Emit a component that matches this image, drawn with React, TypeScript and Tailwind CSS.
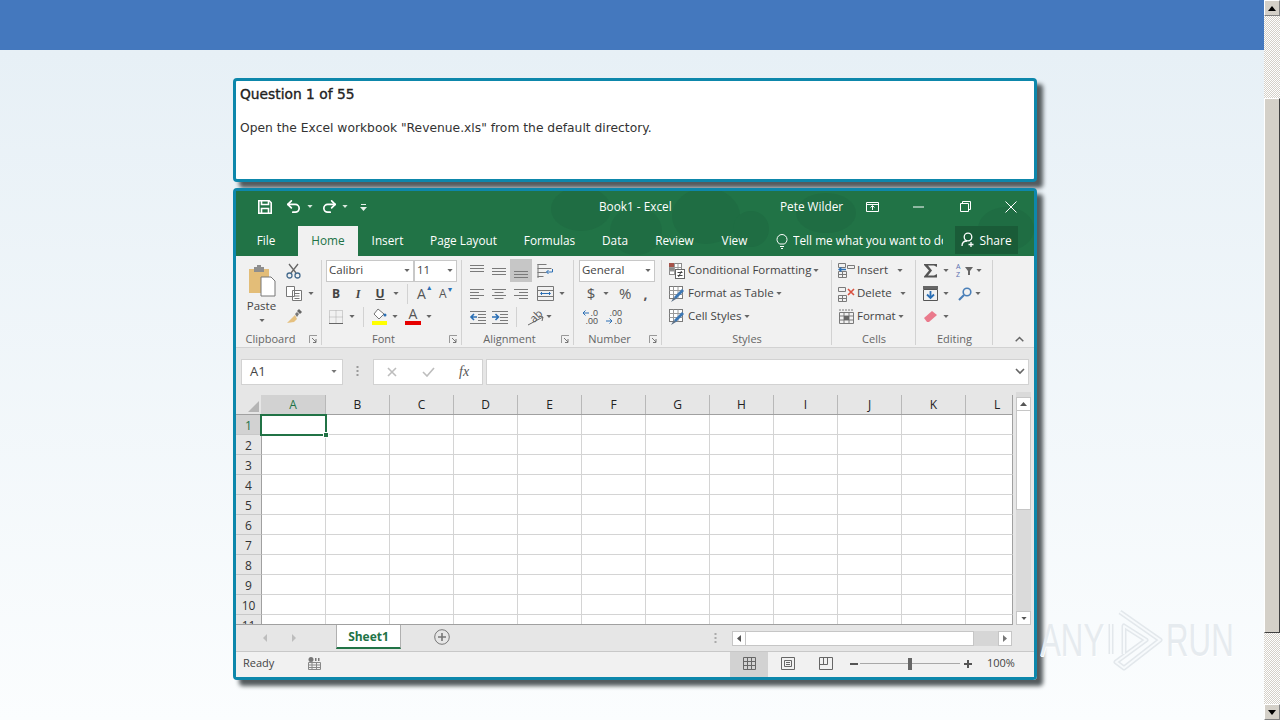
import React from "react";
import { Undo2, Redo2 } from "lucide-react";

const Caret = ({ c = "#666", className = "" }: { c?: string; className?: string }) => (
  <svg width="6" height="3" viewBox="0 0 7 4" className={className}><path d="M0 0h7L3.500 4z" fill={c} /></svg>
);

const Launcher = () => (
  <svg width="9" height="9" viewBox="0 0 9 9"><path d="M.5 8V.5H8" fill="none" stroke="#999" /><path d="M3 3l4 4M7 4v3.500H4" fill="none" stroke="#777" /></svg>
);

const AlignV = ({ top }: { top: number }) => (
  <svg width="16" height="14" viewBox="0 0 16 14">
    {[0, 3, 6].map((d) => (
      <path key={d} d={`M1 ${top + d + 0.5}h14`} stroke="#7a7a7a" />
    ))}
  </svg>
);

const AlignH = ({ kind }: { kind: "l" | "c" | "r" }) => {
  const w = [14, 9, 14, 9];
  return (
    <svg width="16" height="14" viewBox="0 0 16 14">
      {w.map((l, i) => {
        const x = kind === "l" ? 1 : kind === "r" ? 15 - l : 8 - l / 2;
        return <path key={i} d={`M${x} ${2.5 + i * 3}h${l}`} stroke="#7a7a7a" />;
      })}
    </svg>
  );
};

const Indent = ({ flip }: { flip?: boolean }) => (
  <svg width="18" height="14" viewBox="0 0 18 14">
    {[1, 4, 7, 10, 13].map((y) => (
      <path key={y} d={`M${y === 1 || y === 13 ? 1 : 9} ${y + 0.5}H17`} stroke="#7a7a7a" />
    ))}
    <path d={flip ? "M1 7h6M4.500 4L7.500 7l-3 3" : "M2 7h6M5 4L2 7l3 3"} fill="none" stroke="#2b6fb5" strokeWidth="1.600" />
  </svg>
);

const CondIcon = () => (
  <svg width="17" height="17" viewBox="0 0 17 17">
    <rect x="1.500" y="1.500" width="12" height="11" fill="#fff" stroke="#8a8a8a" />
    <path d="M1 1h5v4H1z" fill="#a5534a" />
    <path d="M1 5h5v4H1z" fill="#8a8a8a" />
    <path d="M6.500 1.500v11M1.500 5.500h12M1.500 9h12M10 1.500v11" stroke="#9a9a9a" />
    <rect x="7.500" y="7.500" width="9" height="9" fill="#fff" stroke="#666" />
    <path d="M9.500 10.500h5M9.500 13.500h5M13.500 9l-3 6" stroke="#444" fill="none" />
  </svg>
);

const TableIcon = () => (
  <svg width="17" height="17" viewBox="0 0 17 17">
    <rect x="1.500" y="1.500" width="13" height="12" fill="#fff" stroke="#7a7a7a" />
    <path d="M1.500 5.500h13M1.500 9.500h13M5.500 1.500v12M10 1.500v12" stroke="#9a9a9a" />
    <path d="M16 6l-6 6-2 2-2-2 2-2 6-6z" fill="#3d78b5" />
    <path d="M3 17l3-5 2 2z" fill="#5a6f86" />
  </svg>
);

const InsertIcon = () => (
  <svg width="17" height="17" viewBox="0 0 17 17" fill="none">
    <path d="M.5 1.500h7v4h-7zM.5 9.500h8v6h-8zM4.500 9.500v6M.5 12.500h8" stroke="#7a7a7a" />
    <path d="M9.500 3.500h7v3h-7z" stroke="#7a7a7a" />
    <path d="M1 7.500h7M3.500 5.500L1 7.500l2.500 2" stroke="#2b6fb5" strokeWidth="1.300" />
  </svg>
);

const RibbonRow = ({ children, className = "" }: { children?: React.ReactNode; className?: string }) => (
  <div className={`flex h-[23px] items-center ${className}`}>{children}</div>
);

const Group = ({ label, launcher, widthClass, children }: { label: string; launcher?: boolean; widthClass: string; children: React.ReactNode }) => (
  <div className={`relative flex h-full flex-col pt-[3px] ${widthClass}`}>
    <div className="h-[73px]">{children}</div>
    <div className={`flex h-[16px] items-center justify-center text-[11px] text-[#666] ${launcher ? "pr-[17px]" : ""}`}>{label}</div>
    <div className="absolute right-0 top-[4px] h-[85px] w-px bg-[#d2d2d2]" />
    {launcher && (
      <div className="absolute right-[4px] bottom-[3px]">
        <Launcher />
      </div>
    )}
  </div>
);

const Sep = ({ className = "" }: { className?: string }) => <div className={`h-[20px] w-px bg-[#d2d2d2] ${className}`} />;

const Combo = ({ text, w }: { text: string; w: string }) => (
  <div className={`mt-[1px] flex h-[22px] items-center justify-between border border-[#c8c8c8] bg-white pb-[2px] pl-[2px] pr-[3px] text-[11.5px] text-[#444] ${w}`}>
    <span>{text}</span>
    <Caret />
  </div>
);

const COLS = ["A", "B", "C", "D", "E", "F", "G", "H", "I", "J", "K", "L"];
const ROWS = [1, 2, 3, 4, 5, 6, 7, 8, 9, 10, 11];

const SmallBtn = ({ children, className = "" }: { children?: React.ReactNode; className?: string }) => (
  <div className={`flex items-center justify-center border border-[#c6c6c6] bg-white ${className}`}>{children}</div>
);

export default function App() {
  return (
    <div className="relative flex h-[720px] w-[1280px] overflow-hidden font-['Open_Sans',sans-serif]">
      <main className="flex h-full w-[1264px] flex-col">
        <header className="h-[50px] shrink-0 bg-[#4478be]" />
        <div className="flex-1 bg-gradient-to-b from-[#e7f0f6] to-[#fbfdfe] pl-[233px] pt-[28px]">
          {/* Question */}
          <section className="h-[104px] w-[804px] rounded-[4px] border-[3px] border-[#0d87ab] bg-white pl-[4px] shadow-[6px_6px_4px_#545b5e] font-['DejaVu_Sans',sans-serif] text-[#222]">
            <h1 className="mt-[2px] text-[13.8px] leading-[22px] font-normal [-webkit-text-stroke:0.35px_#222]">Question 1 of 55</h1>
            <p className="mt-[12px] text-[12.3px] leading-[22px] text-[#333]">Open the Excel workbook "Revenue.xls" from the default directory.</p>
          </section>

          {/* Excel */}
          <section className="mt-[6px] flex h-[492px] w-[804px] flex-col rounded-[4px] border-[3px] border-[#0d87ab] shadow-[6px_6px_4px_#545b5e]">
            <div className="relative h-[65px] shrink-0 bg-[#217346] text-[11.8px] text-white">
              <svg className="absolute inset-0" width="798" height="65" viewBox="0 0 798 65">
                <g fill="#1f6d43">
                  <ellipse cx="345" cy="18" rx="30" ry="22" />
                  <ellipse cx="400" cy="40" rx="26" ry="24" />
                  <ellipse cx="470" cy="25" rx="34" ry="28" />
                  <ellipse cx="515" cy="38" rx="18" ry="18" />
                  <ellipse cx="590" cy="22" rx="30" ry="20" />
                  <ellipse cx="770" cy="38" rx="28" ry="22" />
                </g>
              </svg>

              {/* Title */}
              <div className="relative flex h-[35px] items-center pb-[4px]">
                <svg className="ml-[22px]" width="14" height="14" viewBox="0 0 14 14" fill="none" stroke="#fff" strokeWidth="1.600">
                  <path d="M.8.8h10.400l2 2v10.400H.8z" />
                  <path d="M3.500 1v3.500h7V1M3.500 13V8.500h7V13" />
                </svg>
                <Undo2 className="ml-[13px]" size={17} strokeWidth={2.4} color="#fff" />
                <Caret c="#d8e8de" className="ml-[5px]" />
                <Redo2 className="ml-[8px]" size={17} strokeWidth={2.4} color="#fff" />
                <Caret c="#d8e8de" className="ml-[4px]" />
                <svg className="ml-[12px]" width="7" height="8" viewBox="0 0 7 8"><path d="M1 1.500h5" stroke="#e8f2ec" /><path d="M0 4h7L3.500 8z" fill="#e8f2ec" /></svg>
                <span className="ml-[232px] w-[181px]">Book1 - Excel</span>
                <span>Pete Wilder</span>
                <svg className="ml-[23px]" width="13" height="10" viewBox="0 0 13 10" fill="none" stroke="#fff"><path d="M.5.500h12v9H.5zM.5 2.500h12M6.500 8V4M4.500 5.500l2-2 2 2" /></svg>
                <svg className="ml-[34px]" width="11" height="2" viewBox="0 0 11 2"><path d="M0 1h11" stroke="#fff" /></svg>
                <svg className="ml-[36px]" width="11" height="11" viewBox="0 0 11 11" fill="none" stroke="#fff"><path d="M.5 2.500h8v8h-8zM2.500 2.500v-2h8v8h-2" /></svg>
                <svg className="ml-[34px]" width="12" height="12" viewBox="0 0 12 12" fill="none" stroke="#fff"><path d="M.5.500l11 11M11.500.5l-11 11" /></svg>
              </div>

              {/* Tabs */}
              <div className="relative flex h-[30px] items-center">
                <div className="flex h-full w-[60px] items-center justify-center">File</div>
                <div className="ml-[2px] flex h-full w-[60px] items-center justify-center bg-[#f1f1f1] text-[#217346]">Home</div>
                <div className="flex h-full w-[59px] items-center justify-center">Insert</div>
                <div className="flex h-full w-[93px] items-center justify-center">Page Layout</div>
                <div className="flex h-full w-[79px] items-center justify-center">Formulas</div>
                <div className="flex h-full w-[52px] items-center justify-center">Data</div>
                <div className="flex h-full w-[67px] items-center justify-center">Review</div>
                <div className="flex h-full w-[53px] items-center justify-center">View</div>
                <svg className="ml-[15px]" width="12" height="15" viewBox="0 0 12 15" fill="none" stroke="#fff"><path d="M3.500 10C2 8.500 1 7.500 1 5.500a5 5 0 0 1 10 0c0 2-1 3-2.500 4.500zM4 12.500h4M5 14.500h2" /></svg>
                <div className="ml-[5px] w-[150px] overflow-hidden whitespace-nowrap">Tell me what you want to do</div>
                <div className="ml-[12px] flex h-[28px] w-[63px] items-center justify-center gap-[3px] self-start bg-[#1a5c38]">
                  <svg width="15" height="16" viewBox="0 0 15 16" fill="none" stroke="#fff" strokeWidth="1.300"><circle cx="7" cy="5" r="3.800" /><path d="M1 14c0-3 2-5 5-5M10 10v5M7.500 12.500h5" /></svg>
                  <span className="pt-[1px] text-[12px]">Share</span>
                </div>
              </div>
            </div>

            {/* Ribbon */}
            <div className="flex h-[92px] shrink-0 border-b border-[#d2d2d2] bg-[#f1f1f1] text-[#444]">
              <Group label="Clipboard" launcher widthClass="w-[86px]">
                <div className="flex h-full">
                  <div className="flex w-[48px] flex-col items-center pl-[3px]">
                    <svg className="mt-[5px]" width="28" height="33" viewBox="0 0 28 33">
                      <path d="M1 5h20v24H1z" fill="#e3bd78" />
                      <path d="M6 3h10v5H6z" fill="#8e8e8e" />
                      <path d="M9 1h4v3H9z" fill="#8e8e8e" />
                      <path d="M13 13h10l4 4v15H13z" fill="#fff" stroke="#777" />
                    </svg>
                    <span className="mt-[1px] text-[11.5px] leading-[15px]">Paste</span>
                    <Caret className="mt-[6px]" />
                  </div>
                  <div className="flex flex-col">
                    <RibbonRow className="pl-[2px]">
                      <svg width="15" height="16" viewBox="0 0 15 16" fill="none" stroke="#456b8e" strokeWidth="1.300"><path d="M3 1l7 9M12 1L5 10" stroke="#666" /><circle cx="3.500" cy="12.500" r="2.500" /><circle cx="11.500" cy="12.500" r="2.500" /></svg>
                    </RibbonRow>
                    <RibbonRow className="gap-[6px] pl-[2px]">
                      <svg width="16" height="15" viewBox="0 0 16 15" fill="#fff" stroke="#777"><path d="M.5.500h8v10h-8zM6.500 4.500h9v10h-9z" /><path d="M8.500 7.500h5M8.500 10h5M8.500 12.500h5" /></svg>
                      <Caret />
                    </RibbonRow>
                    <RibbonRow className="pl-[2px]">
                      <svg width="16" height="15" viewBox="0 0 16 15"><path d="M9 6l-3 3-5 5 7-1 3-3z" fill="#e5c07f" /><path d="M9 5l2-2 2 2-2 3z" fill="#777" /><path d="M11 2l2-2 3 3-2 2z" fill="#666" /></svg>
                    </RibbonRow>
                  </div>
                </div>
              </Group>

              <Group label="Font" launcher widthClass="w-[140px]">
                <div className="flex flex-col pl-[4px]">
                  <div className="flex h-[23px] items-start">
                    <Combo text="Calibri" w="w-[88px]" />
                    <Combo text="11" w="w-[43px]" />
                  </div>
                  <RibbonRow>
                    <span className="w-[20px] text-center text-[12px] font-bold">B</span>
                    <span className="ml-[2px] w-[20px] text-center font-['Liberation_Serif',serif] text-[12px] font-bold italic">I</span>
                    <span className="ml-[2px] w-[20px] text-center text-[12px] font-bold underline">U</span>
                    <Caret className="ml-[3px]" />
                    <Sep className="ml-[8px]" />
                    <span className="ml-[9px] flex w-[16px] items-start text-[14px] text-[#555]">A<span className="text-[7px] text-[#2b6fb5]">▲</span></span>
                    <span className="ml-[6px] flex w-[16px] items-start text-[12px] text-[#555]">A<span className="text-[7px] text-[#2b6fb5]">▼</span></span>
                  </RibbonRow>
                  <RibbonRow>
                    <svg className="ml-[3px]" width="14" height="14" viewBox="0 0 14 14" fill="none"><path d="M.5.500h13v13H.5zM7 .500v13M.5 7h13" stroke="#aaa" strokeDasharray="1 1" /><path d="M0 13.500h14" stroke="#666" /></svg>
                    <Caret className="ml-[6px]" />
                    <Sep className="ml-[8px]" />
                    <div className="ml-[8px] flex w-[15px] flex-col items-center">
                      <svg width="15" height="12" viewBox="0 0 15 12"><path d="M6 1l6 5-5 5-5-5z" fill="#fff" stroke="#777" /><circle cx="13" cy="7" r="1.500" fill="#2b6fb5" /></svg>
                      <div className="mt-[1px] h-[4px] w-[15px] bg-[#ffff00]" />
                    </div>
                    <Caret className="ml-[5px]" />
                    <div className="ml-[7px] flex w-[16px] flex-col items-center leading-none">
                      <span className="h-[12px] text-[14px] leading-[12px] text-[#555]">A</span>
                      <div className="mt-[1px] h-[4px] w-[16px] bg-[#e60000]" />
                    </div>
                    <Caret className="ml-[5px]" />
                  </RibbonRow>
                </div>
              </Group>

              <Group label="Alignment" launcher widthClass="w-[112px]">
                <div className="flex flex-col pl-[7px]">
                  <RibbonRow className="gap-[6px]">
                    <AlignV top={1} />
                    <AlignV top={4} />
                    <div className="mx-[-3px] flex h-[23px] w-[22px] items-center justify-center bg-[#c6c6c6]"><AlignV top={7} /></div>
                    <svg className="ml-[2px]" width="17" height="16" viewBox="0 0 17 16" fill="none"><path d="M.5 1.500h9M.5 5.500h14M.5 9.500h9M.5 13.500h6M1 1v14" stroke="#7a7a7a" /><path d="M15.500 6v3h-6M11.500 7l-2 2 2 2" stroke="#2b6fb5" /></svg>
                  </RibbonRow>
                  <RibbonRow className="gap-[6px]">
                    <AlignH kind="l" />
                    <AlignH kind="c" />
                    <AlignH kind="r" />
                    <svg className="ml-[2px]" width="17" height="15" viewBox="0 0 17 15" fill="none"><path d="M.5.500h16v14H.5zM.5 4.500h16M.5 10.500h16" stroke="#777" /><path d="M4 7.500h9M5 6L3.500 7.500 5 9M12 6l1.500 1.500L12 9" stroke="#2b6fb5" /></svg>
                    <Caret className="ml-[-1px]" />
                  </RibbonRow>
                  <RibbonRow className="gap-[4px]">
                    <Indent />
                    <Indent flip />
                    <Sep className="ml-[3px]" />
                    <div className="relative ml-[4px] flex h-[18px] w-[20px] items-center justify-center">
                      <span className="mb-[3px] -rotate-45 text-[11px] leading-none text-[#555]">ab</span>
                      <svg className="absolute bottom-0 left-[2px]" width="18" height="11" viewBox="0 0 18 11" fill="none"><path d="M1 10L16 2M12 1l4 1-1 4" stroke="#666" /></svg>
                    </div>
                    <Caret className="ml-[-3px]" />
                  </RibbonRow>
                </div>
              </Group>

              <Group label="Number" launcher widthClass="w-[88px]">
                <div className="flex flex-col pl-[5px]">
                  <div className="flex h-[23px] items-start"><Combo text="General" w="w-[76px]" /></div>
                  <RibbonRow>
                    <span className="ml-[7px] w-[10px] text-center text-[15px] text-[#555]">$</span>
                    <Caret className="ml-[7px]" />
                    <span className="ml-[10px] text-[15px] text-[#555]">%</span>
                    <span className="ml-[12px] text-[14px] font-bold leading-[14px] text-[#555]">,</span>
                  </RibbonRow>
                  <RibbonRow className="gap-[7px] pl-[2px] font-['Liberation_Sans',sans-serif] text-[9px] leading-[8px] text-[#555]">
                    <div className="flex w-[17px] flex-col items-end">
                      <span className="flex items-center gap-[1px]"><svg width="7" height="6" viewBox="0 0 7 6" fill="none" stroke="#2b6fb5"><path d="M7 3H1M3.500 .5L1 3l2.500 2.500" /></svg>.0</span>
                      <span>.00</span>
                    </div>
                    <div className="flex w-[17px] flex-col items-end">
                      <span>.00</span>
                      <span className="flex items-center gap-[1px]"><svg width="7" height="6" viewBox="0 0 7 6" fill="none" stroke="#2b6fb5"><path d="M0 3h6M3.500 .5L6 3 3.500 5.500" /></svg>.0</span>
                    </div>
                  </RibbonRow>
                </div>
              </Group>

              <Group label="Styles" widthClass="w-[170px]">
                <div className="flex flex-col pl-[6px] text-[11.5px]">
                  <RibbonRow className="gap-[2px]"><CondIcon /><span className="mb-[1px] ml-[1px]">Conditional Formatting</span><Caret /></RibbonRow>
                  <RibbonRow className="gap-[2px]"><TableIcon /><span className="mb-[1px] ml-[1px]">Format as Table</span><Caret /></RibbonRow>
                  <RibbonRow className="gap-[2px]"><TableIcon /><span className="mb-[1px] ml-[1px]">Cell Styles</span><Caret /></RibbonRow>
                </div>
              </Group>

              <Group label="Cells" widthClass="w-[84px]">
                <div className="flex flex-col pl-[6px] text-[11.5px]">
                  <RibbonRow>
                    <InsertIcon /><span className="mb-[1px] ml-[2px] w-[40px]">Insert</span><Caret />
                  </RibbonRow>
                  <RibbonRow>
                    <svg width="17" height="16" viewBox="0 0 17 16" fill="none"><path d="M.5 1.500h7v4h-7zM.5 9.500h8v6h-8zM4.500 9.500v6M.5 12.500h8" stroke="#7a7a7a" /><path d="M10 3l6 6M16 3l-6 6" stroke="#d9503f" strokeWidth="1.600" /></svg>
                    <span className="mb-[1px] ml-[2px] w-[43px]">Delete</span><Caret />
                  </RibbonRow>
                  <RibbonRow>
                    <svg width="17" height="16" viewBox="0 0 17 16" fill="none"><path d="M1.500 3.500h14v11h-14zM1.500 7h14M1.500 11h14M6 3.500v11M11 3.500v11" stroke="#7a7a7a" /><path d="M1 1h15" stroke="#7a7a7a" strokeDasharray="2 1" /><path d="M6 7h5v4H6z" fill="#666" /></svg>
                    <span className="mb-[1px] ml-[2px]">Format</span><Caret className="ml-[2px]" />
                  </RibbonRow>
                </div>
              </Group>

              <Group label="Editing" widthClass="w-[77px]">
                <div className="flex flex-col pl-[7px]">
                  <RibbonRow>
                    <svg width="16" height="15" viewBox="0 0 16 15"><path d="M1 1h13v3L11 2.500H5L9 7.500 5 12.500h6l3-1.500v3.500H1v-1L6 7.500 1 2z" fill="#555" /></svg>
                    <Caret className="ml-[4px]" />
                    <span className="ml-[7px] flex w-[8px] flex-col text-[7px] leading-[8px] text-[#5a6fb0]"><span>A</span><span>Z</span></span>
                    <svg className="ml-[1px]" width="8" height="8" viewBox="0 0 8 8"><path d="M0 0h8L5 4v4H3V4z" fill="#666" /></svg>
                    <Caret className="ml-[3px]" />
                  </RibbonRow>
                  <RibbonRow>
                    <svg width="16" height="15" viewBox="0 0 16 15" fill="none"><path d="M.5 3.500h14v11H.5z" stroke="#555" /><path d="M0 0h15v3H0z" fill="#666" /><path d="M7.500 5v7M4 8.500l3.500 3.500L11 8.500" stroke="#2b6fb5" strokeWidth="1.800" /></svg>
                    <Caret className="ml-[4px]" />
                    <svg className="ml-[9px]" width="14" height="14" viewBox="0 0 14 14" fill="none"><circle cx="9" cy="5" r="3.800" stroke="#4a7fb8" strokeWidth="1.600" /><path d="M6 8l-5 5" stroke="#4a7fb8" strokeWidth="2.200" /></svg>
                    <Caret className="ml-[3px]" />
                  </RibbonRow>
                  <RibbonRow>
                    <svg width="15" height="13" viewBox="0 0 15 13"><path d="M1 8l8-7 5 4-8 7H4z" fill="#ea7a8c" /></svg>
                    <Caret className="ml-[5px]" />
                  </RibbonRow>
                </div>
              </Group>

              <div className="flex flex-1 items-end justify-end pb-[5px] pr-[10px]">
                <svg width="9" height="6" viewBox="0 0 9 6" fill="none"><path d="M.7 5.300L4.500 1.500l3.800 3.800" stroke="#666" strokeWidth="1.500" /></svg>
              </div>
            </div>

            {/* Formula bar */}
            <div className="flex h-[44px] shrink-0 items-center bg-[#e6e6e6] px-[5px] pt-[3px]">
              <div className="flex h-[26px] w-[102px] items-center justify-between border border-[#d2d2d2] bg-white pl-[8px] pr-[5px] text-[13px] text-[#444]">
                <span>A1</span>
                <Caret c="#777" />
              </div>
              <svg className="ml-[13px]" width="3" height="11" viewBox="0 0 3 11"><path d="M1.500 0v2M1.500 4v2M1.500 8v2" stroke="#999" strokeWidth="2" /></svg>
              <div className="ml-[14px] flex h-[26px] w-[110px] items-center border border-[#d2d2d2] bg-white">
                <svg className="ml-[13px]" width="10" height="10" viewBox="0 0 10 10"><path d="M1 1l8 8M9 1L1 9" stroke="#bdbdbd" strokeWidth="1.600" /></svg>
                <svg className="ml-[25px]" width="13" height="10" viewBox="0 0 13 10" fill="none"><path d="M1 5l4 4 7-8" stroke="#bdbdbd" strokeWidth="1.600" /></svg>
                <span className="ml-[24px] font-['Liberation_Serif',serif] text-[14px] italic text-[#555]">fx</span>
              </div>
              <div className="ml-[3px] flex h-[26px] flex-1 items-center justify-end border border-[#d2d2d2] bg-white pr-[3px]">
                <svg width="10" height="7" viewBox="0 0 10 7" fill="none"><path d="M1 1l4 4 4-4" stroke="#666" strokeWidth="1.600" /></svg>
              </div>
            </div>

            {/* Grid */}
            <div className="flex h-[233px] shrink-0 bg-[#e6e6e6] text-[#444]">
              <div className="flex h-full w-[777px] flex-col overflow-hidden border-b border-[#a0a0a0] pt-[3px]">
                <div className="flex h-[20px] shrink-0 border-b border-[#a0a0a0]">
                  <div className="flex w-[25px] items-end justify-end p-[2px]">
                    <div className="h-0 w-0 border-b-[11px] border-l-[11px] border-b-[#b5b5b5] border-l-transparent" />
                  </div>
                  {COLS.map((c) => (
                    <div
                      key={c}
                      className={`flex shrink-0 items-center border-r text-[12px] ${c === "L" ? "w-[47px] justify-start border-r-[#a0a0a0] pl-[28px] text-[#222]" : c === "A" ? "w-[65px] justify-center border-r-[#b8b8b8]" : "w-[64px] justify-center border-r-[#b8b8b8]"} ${c === "A" ? "bg-[#d2d2d2] text-[#217346]" : "text-[#222]"}`}
                    >
                      {c}
                    </div>
                  ))}
                </div>
                {ROWS.map((r) => (
                  <div key={r} className="flex h-[20px] shrink-0">
                    <div className={`flex w-[26px] items-center justify-center border-b border-r border-b-[#c8c8c8] border-r-[#a0a0a0] pt-[2px] text-[12px] ${r === 1 ? "bg-[#d2d2d2] text-[#217346]" : "text-[#333]"}`}>{r}</div>
                    {COLS.map((c) => (
                      <div key={c} className={`relative shrink-0 border-b border-r border-b-[#d4d4d4] bg-white ${c === "L" ? "w-[47px] border-r-[#a0a0a0]" : "w-[64px] border-r-[#d4d4d4]"}`}>
                        {r === 1 && c === "A" && (
                          <div className="absolute left-[-2px] top-[-1px] z-10 h-[22px] w-[67px] border-2 border-[#217346]">
                            <div className="absolute bottom-[-4px] right-[-4px] h-[6px] w-[6px] border border-white bg-[#217346]" />
                          </div>
                        )}
                      </div>
                    ))}
                  </div>
                ))}
              </div>
              <div className="ml-[3px] flex h-full w-[15px] flex-col bg-[#dadada] pt-[5px]">
                <SmallBtn className="h-[14px] w-[15px]"><svg width="7" height="4" viewBox="0 0 7 4"><path d="M0 4h7L3.500 0z" fill="#555" /></svg></SmallBtn>
                <div className="h-[99px] w-[15px] border border-t-0 border-[#c6c6c6] bg-white" />
                <div className="flex-1" />
                <SmallBtn className="h-[14px] w-[15px]"><Caret c="#555" /></SmallBtn>
              </div>
            </div>

            {/* Sheet tabs */}
            <div className="flex h-[27px] shrink-0 items-start border-b border-[#c8c8c8] bg-[#e6e6e6]">
              <svg className="ml-[27px] mt-[9px]" width="5" height="8" viewBox="0 0 5 8"><path d="M4 0v8L0 4z" fill="#bdbdbd" /></svg>
              <svg className="ml-[24px] mt-[9px]" width="5" height="8" viewBox="0 0 5 8"><path d="M0 0v8l4-4z" fill="#bdbdbd" /></svg>
              <div className="ml-[39px] flex h-[24px] w-[65px] items-center justify-center border-x border-b-2 border-x-[#b0b0b0] border-b-[#217346] bg-white pt-[2px] text-[12px] font-bold text-[#217346]">Sheet1</div>
              <svg className="ml-[33px] mt-[4px]" width="16" height="16" viewBox="0 0 16 16" fill="none" stroke="#777"><circle cx="8" cy="8" r="7.300" /><path d="M8 4v8M4 8h8" strokeWidth="1.600" /></svg>
              <svg className="ml-[264px] mt-[8px]" width="3" height="11" viewBox="0 0 3 11"><path d="M1.500 0v2M1.500 4v2M1.500 8v2" stroke="#aaa" strokeWidth="2" /></svg>
              <div className="ml-[15px] mt-[6px] flex h-[15px] w-[280px]">
                <SmallBtn className="h-full w-[14px]"><svg width="5" height="7" viewBox="0 0 5 7"><path d="M4 0v7L0 3.500z" fill="#555" /></svg></SmallBtn>
                <div className="h-full w-[228px] border border-l-0 border-[#c6c6c6] bg-white" />
                <div className="h-full flex-1 bg-[#d6d6d6]" />
                <SmallBtn className="h-full w-[14px]"><svg width="5" height="7" viewBox="0 0 5 7"><path d="M0 0v7l4-3.500z" fill="#777" /></svg></SmallBtn>
              </div>
            </div>

            {/* Status */}
            <div className="flex h-[25px] shrink-0 items-center bg-[#f1f1f1] pb-[2px] text-[11px] text-[#444]">
              <span className="ml-[7px] w-[65px]">Ready</span>
              <svg width="13" height="13" viewBox="0 0 13 13" fill="none"><circle cx="3" cy="2.500" r="2.500" fill="#777" /><path d="M7 1h1.500v3H7zM10 1h1.500v3H10z" fill="#777" /><path d="M.5 5.500h12v7H.5zM.5 8h12M.5 10.500h12M4 5.500v7M8.500 5.500v7" stroke="#888" /></svg>
              <div className="mb-[-2px] ml-[409px] flex h-[25px] w-[38px] items-center justify-center bg-[#d2d2d2] pb-[2px]">
                <svg width="13" height="13" viewBox="0 0 13 13" fill="none" stroke="#666"><path d="M.5.500h12v12H.5zM.5 4.500h12M.5 8.500h12M4.500.5v12M8.500.5v12" /></svg>
              </div>
              <svg className="ml-[13px]" width="14" height="13" viewBox="0 0 14 13" fill="none" stroke="#666"><path d="M.5.500h13v12H.5zM3.500 3.500h7v6h-7zM5 5.500h4M5 7.500h4" /></svg>
              <svg className="ml-[24px]" width="14" height="13" viewBox="0 0 14 13" fill="none" stroke="#666"><path d="M.5.500h13v12H.5zM.5 7.500h8V.5M4.500.5v7" /></svg>
              <svg className="ml-[17px]" width="8" height="2" viewBox="0 0 8 2"><path d="M0 1h8" stroke="#555" strokeWidth="2" /></svg>
              <div className="relative ml-[2px] flex h-[12px] w-[100px] items-center">
                <div className="h-px w-full bg-[#a8a8a8]" />
                <div className="absolute left-[48px] top-0 h-[12px] w-[4px] bg-[#666]" />
              </div>
              <svg className="ml-[4px]" width="8" height="8" viewBox="0 0 8 8"><path d="M4 0v8M0 4h8" stroke="#555" strokeWidth="2" /></svg>
              <span className="ml-[15px]">100%</span>
            </div>
          </section>
        </div>
      </main>

      {/* Page scrollbar */}
      <aside className="flex h-full w-[16px] flex-col bg-[repeating-conic-gradient(#d4d0c8_0_25%,#ffffff_0_50%)] bg-[length:2px_2px]">
        <div className="flex h-[16px] items-center justify-center border border-[#808080] border-l-white border-t-white bg-[#d4d0c8]">
          <svg width="8" height="5" viewBox="0 0 8 5"><path d="M0 5h8L4 0z" fill="#000" /></svg>
        </div>
        <div className="mt-[82px] h-[535px] border border-[#404040] border-l-white border-t-white bg-[#d4d0c8]" />
        <div className="flex-1" />
        <div className="flex h-[16px] items-center justify-center border border-[#808080] border-l-white border-t-white bg-[#d4d0c8]">
          <svg width="8" height="5" viewBox="0 0 8 5"><path d="M0 0h8L4 5z" fill="#000" /></svg>
        </div>
      </aside>

      {/* Watermark */}
      <div className="absolute left-[1040px] top-[608px] flex h-[64px] w-[194px] items-center font-['Liberation_Sans',sans-serif] text-[46px] text-[#e6ebef] [text-shadow:1px_1px_0_#ffffff]">
        <span className="w-[68px] origin-left scale-x-[0.68]">ANY</span>
        <svg width="56" height="64" viewBox="0 0 56 64" fill="none" strokeLinejoin="round">
          <path d="M3 16v30M12 4l40 28-36 28-8-6 30-22-22-14v28" stroke="#e3e8ec" strokeWidth="5" />
          <path d="M3 16v30M12 4l40 28-36 28-8-6 30-22-22-14v28" stroke="#f7fafc" strokeWidth="2" />
        </svg>
        <span className="ml-[2px] w-[66px] origin-left scale-x-[0.68]">RUN</span>
      </div>
    </div>
  );
}
